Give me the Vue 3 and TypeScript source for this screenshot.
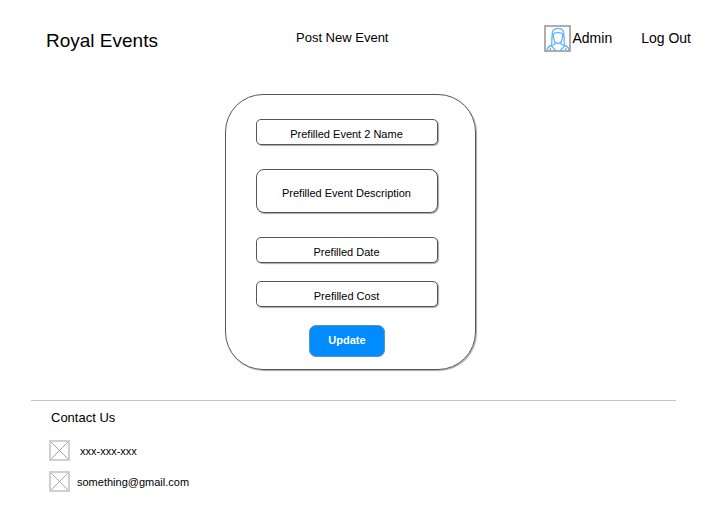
<script setup lang="ts">
import { ref } from 'vue'

const eventName = ref<string>('Prefilled Event 2 Name')
const description = ref<string>('Prefilled Event Description')
const date = ref<string>('Prefilled Date')
const cost = ref<string>('Prefilled Cost')
</script>

<template>
  <div class="page">
    <header class="header">
      <h1 class="brand">Royal Events</h1>
      <nav class="nav"><a href="#post">Post New Event</a></nav>
      <div class="account">
        <a class="admin" href="#admin">
          <svg class="avatar" viewBox="0 0 27 27" aria-hidden="true">
            <rect x="1" y="1" width="25" height="25" fill="#fff" stroke="#999" stroke-width="1.6" />
            <g fill="none" stroke="#61b5ff" stroke-width="1.3">
              <path d="M8.300 12C7.500 6 9.500 3.300 14 3.300S20.500 6 19.700 12" />
              <path d="M9.300 9C9.300 14.500 10.500 18.500 14 18.500S18.700 14.500 18.700 9C16.500 7.200 11.500 7.200 9.300 9Z" />
              <path d="M8.300 11C7.300 14 8.300 16.500 7.500 20M19.700 11C20.700 14 19.700 16.500 20.500 20" />
              <path d="M3 25.300C3.200 22.300 4.500 21.300 7.500 20.500L11 19V17M25 25.300C24.800 22.300 23.500 21.300 20.500 20.500L17 19V17" />
              <path d="M7.500 20.500C8.500 23 10.500 23.500 11.500 25.300M20.500 20.500C19.500 23 17.500 23.500 16.500 25.300M6.300 23V25.300M21.700 23V25.300" />
            </g>
          </svg>
          <span>Admin</span>
        </a>
        <a href="#logout">Log Out</a>
      </div>
    </header>

    <main class="main">
      <form class="card" @submit.prevent>
        <input v-model="eventName" class="field name" type="text" aria-label="Event name" />
        <textarea v-model="description" class="field description" rows="1" aria-label="Event description"></textarea>
        <input v-model="date" class="field date" type="text" aria-label="Date" />
        <input v-model="cost" class="field" type="text" aria-label="Cost" />
        <button class="update" type="submit">Update</button>
      </form>
    </main>

    <footer class="footer">
      <h2 class="contact-title">Contact Us</h2>
      <div class="contact phone">
        <svg class="placeholder" viewBox="0 0 21 21" aria-hidden="true">
          <path d="M1 1L20 20M20 1L1 20" stroke="#aaa" />
          <rect x="1" y="1" width="19" height="19" fill="none" stroke="#d0d0d0" stroke-width="2" />
        </svg>
        <span>xxx-xxx-xxx</span>
      </div>
      <div class="contact">
        <svg class="placeholder" viewBox="0 0 21 21" aria-hidden="true">
          <path d="M1 1L20 20M20 1L1 20" stroke="#aaa" />
          <rect x="1" y="1" width="19" height="19" fill="none" stroke="#d0d0d0" stroke-width="2" />
        </svg>
        <a href="mailto:something@gmail.com">something@gmail.com</a>
      </div>
    </footer>
  </div>
</template>

<style>
body {
  background: #fff;
}
</style>

<style scoped>
.page {
  font-family: "Liberation Sans", Arial, sans-serif;
  color: #000;
}

a {
  color: inherit;
  text-decoration: none;
}

h1,
h2 {
  margin: 0;
  font-weight: 400;
}

.header {
  display: grid;
  grid-template-columns: 250px 1fr auto;
  align-items: center;
  padding: 24px 28px 0 46px;
}

.brand {
  padding-top: 6px;
  font-size: 19px;
  line-height: 22px;
}

.nav {
  font-size: 13px;
  line-height: 28px;
}

.account {
  display: flex;
  align-items: center;
  gap: 29px;
  font-size: 14px;
  line-height: 28px;
}

.admin {
  display: flex;
  align-items: center;
  gap: 1px;
}

.avatar {
  width: 27px;
  height: 27px;
}

.main {
  display: flex;
  justify-content: center;
  padding: 42px 18px 30px 0;
}

.card {
  display: flex;
  flex-direction: column;
  box-sizing: border-box;
  width: 251px;
  padding: 24px 37px 12px 30px;
  border: 1px solid #555;
  border-radius: 38px;
  box-shadow: 1px 1px 1px #aaa;
}

.field {
  box-sizing: border-box;
  width: 100%;
  height: 26px;
  margin: 0 0 18px;
  padding: 3px 3px 0 2px;
  border: 1px solid #555;
  border-radius: 5px;
  outline: none;
  background: #fff;
  box-shadow: 1px 1px 1px #aaa;
  color: #000;
  font: 11px/20px "Liberation Sans", Arial, sans-serif;
  text-align: center;
}

.name {
  margin-bottom: 24px;
}

.description {
  display: block;
  height: 44px;
  margin-bottom: 24px;
  padding-top: 13px;
  border-radius: 8px;
  overflow: hidden;
  resize: none;
}

.update {
  align-self: center;
  width: 76px;
  height: 32px;
  padding: 0 0 2px;
  border: 1px solid #5b93c4;
  border-radius: 7px;
  background: #008cff;
  color: #fff;
  font: bold 11px/20px "Liberation Sans", Arial, sans-serif;
}

.footer {
  margin: 0 43px 0 31px;
  padding: 8px 0 0 18px;
  border-top: 1px solid #c4c4c4;
}

.contact-title {
  padding-left: 2px;
  font-size: 13px;
  line-height: 18px;
}

.contact {
  display: flex;
  align-items: center;
  gap: 7px;
  margin-top: 10px;
  font-size: 11px;
  line-height: 20px;
}

.phone {
  gap: 10px;
  margin-top: 13px;
}

.placeholder {
  width: 21px;
  height: 21px;
}
</style>
